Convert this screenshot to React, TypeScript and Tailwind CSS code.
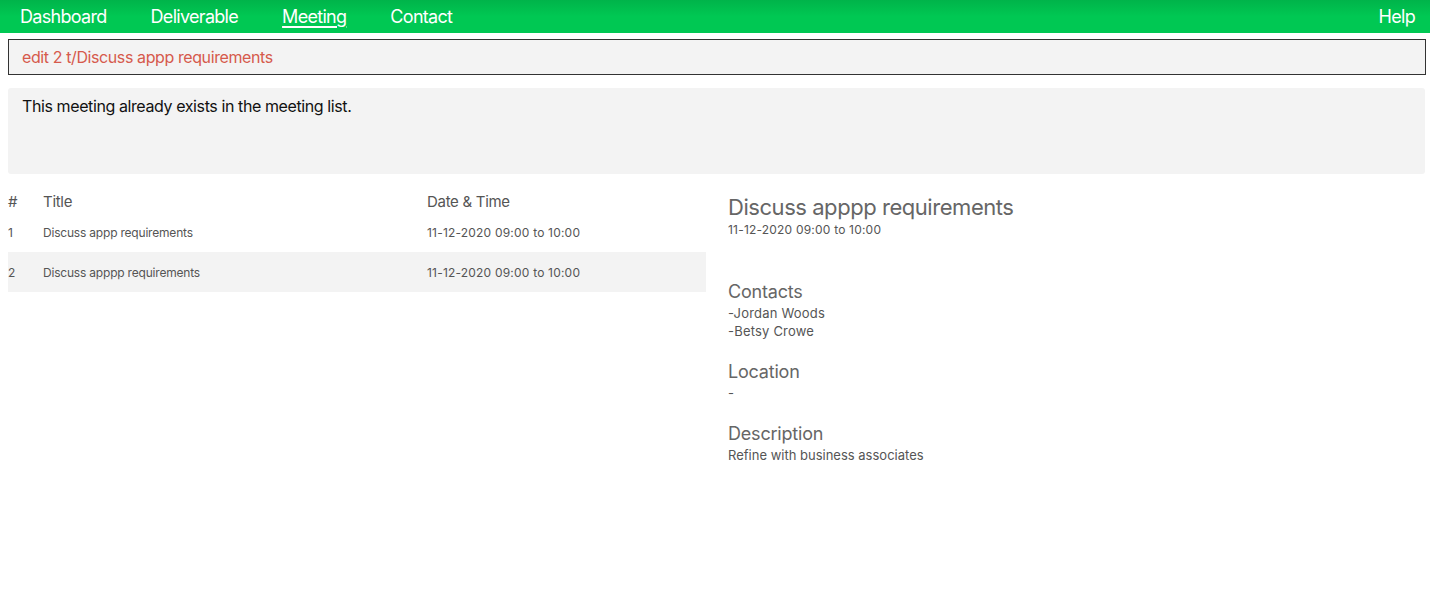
import React from 'react';

const meetings = [
    { id: 1, title: 'Discuss appp requirements', time: '11-12-2020 09:00 to 10:00' },
    { id: 2, title: 'Discuss apppp requirements', time: '11-12-2020 09:00 to 10:00' },
];

const App: React.FC = () => {
    return (
        <div className="min-h-[604px] bg-white font-['Inter',sans-serif]">
            {/* Nav bar */}
            <nav className="h-[33px] flex items-center justify-between pl-5 pr-[15px] bg-gradient-to-b from-[#00b44a] via-[#00c853] to-[#00c853] text-white text-[18px] tracking-[-0.7px]">
                <div className="flex items-center gap-[44px]">
                    <span>Dashboard</span>
                    <span>Deliverable</span>
                    <span className="underline underline-offset-[3px] decoration-[1.5px]">Meeting</span>
                    <span>Contact</span>
                </div>
                <span>Help</span>
            </nav>

            {/* Command box */}
            <div className="mx-2 mt-[6px] h-[36px] w-[1418px] border border-[#333] bg-[#f3f3f3] flex items-center px-[13px] text-[16px] text-[#d65a4c] tracking-[-0.4px]">
                edit 2 t/Discuss appp requirements
            </div>

            {/* Result box */}
            <div className="mx-2 mt-[13px] h-[86px] w-[1417px] rounded-[3px] bg-[#f3f3f3] px-[14px] pt-[6px] text-[16px] text-[#111] tracking-[-0.4px]">
                This meeting already exists in the meeting list.
            </div>

            <div className="flex mt-[18px]">
                {/* Meeting list */}
                <div className="ml-2 w-[698px] text-[#555]">
                    <div className="flex h-[20px] items-center text-[15px] tracking-[-0.3px]">
                        <span className="w-[35px]">#</span>
                        <span className="w-[384px]">Title</span>
                        <span>Date &amp; Time</span>
                    </div>
                    {meetings.map((m, i) => (
                        <div
                            key={m.id}
                            className={`flex items-center h-[40px] pt-[2px] text-[12px] ${i % 2 === 1 ? 'bg-[#f3f3f3]' : ''}`}
                        >
                            <span className="w-[35px]">{m.id}</span>
                            <span className="w-[384px] tracking-[-0.2px]">{m.title}</span>
                            <span className="tracking-[0.2px]">{m.time}</span>
                        </div>
                    ))}
                </div>

                {/* Meeting detail */}
                <div className="ml-[22px] text-[#666]">
                    <div className="text-[22px] leading-[28px] mt-[1px] tracking-[-0.45px]">Discuss apppp requirements</div>
                    <div className="mt-[2px] text-[12px] leading-[14px] text-[#555] tracking-[0.2px]">11-12-2020 09:00 to 10:00</div>

                    <div className="mt-[44px] text-[18px] leading-[22px] tracking-[-0.2px]">Contacts</div>
                    <div className="mt-[1px] text-[13px] leading-[18px] text-[#555] tracking-[0.2px]">-Jordan Woods</div>
                    <div className="text-[13px] leading-[18px] text-[#555] tracking-[0.2px]">-Betsy Crowe</div>

                    <div className="mt-[21px] text-[18px] leading-[22px] tracking-[-0.2px]">Location</div>
                    <div className="mt-[1px] text-[13px] leading-[18px] text-[#555]">-</div>

                    <div className="mt-[21px] text-[18px] leading-[22px] tracking-[-0.2px]">Description</div>
                    <div className="mt-[1px] text-[13px] leading-[18px] text-[#555]">Refine with business associates</div>
                </div>
            </div>
        </div>
    );
};

export default App;
